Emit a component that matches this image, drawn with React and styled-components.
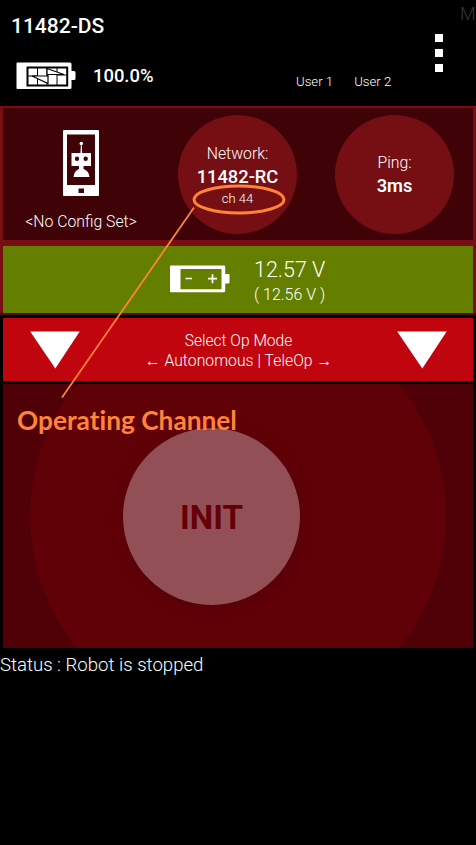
import React from "react";
import styled, { createGlobalStyle } from "styled-components";

const Global = createGlobalStyle`
  * { box-sizing: border-box; }
  body { margin: 0; background: #000; overflow: hidden; }
`;

const Screen = styled.main`
  position: relative;
  width: 476px;
  height: 845px;
  overflow: hidden;
  background: #000;
  color: #fff;
  font-family: Roboto, "Liberation Sans", sans-serif;
`;

const Label = styled.span`
  display: block;
  flex: none;
  white-space: pre;
  font-size: ${(p) => p.$size}px;
  line-height: ${(p) => p.$line}px;
  font-weight: ${(p) => p.$weight || 300};
  letter-spacing: ${(p) => p.$spacing || 0}px;
  color: ${(p) => p.$color || "#fff"};
`;

const Header = styled.header`
  display: grid;
  grid-template-columns: 296px 1fr;
  height: 106px;
`;

const DeviceColumn = styled.div`
  padding: 14px 0 0 11px;
`;

const BatteryRow = styled.div`
  display: flex;
  align-items: center;
  gap: 17px;
  height: 28px;
  margin: 24px 0 0 5px;
`;

const ActionColumn = styled.div`
  display: flex;
  flex-direction: column;
`;

const OverflowTitle = styled.div`
  height: 34px;
  padding: 3px 0 0 164px;
  overflow: hidden;
`;

const MenuButton = styled.button`
  display: grid;
  gap: 7px;
  width: 8px;
  margin: 0 0 0 139px;
  padding: 0;
  border: 0;
  background: none;
`;

const Dot = styled.span`
  width: 8px;
  height: 8px;
  background: #fff;
`;

const Users = styled.div`
  display: flex;
  gap: 21px;
  margin-top: 1px;
`;

const Dashboard = styled.section`
  height: 209px;
  padding: 2px 3px 0;
  background: linear-gradient(#760e13 0 206px, #4c100b 207px);
`;

const StatusPanel = styled.div`
  display: grid;
  grid-template-columns: 156px 157px 157px;
  height: 132px;
  background: #3f0207;
`;

const ConfigCell = styled.div`
  display: flex;
  flex-direction: column;
  align-items: center;
  padding-top: 22px;
  gap: 16px;
`;

const CircleCell = styled.div`
  display: flex;
  justify-content: center;
  padding-top: 7px;
`;

const Circle = styled.div`
  display: flex;
  flex-direction: column;
  align-items: center;
  width: 119px;
  height: 119px;
  padding-top: ${(p) => p.$top}px;
  border-radius: 50%;
  background: #760f14;
`;

const VoltageBar = styled.div`
  display: flex;
  height: 67px;
  margin-top: 6px;
  padding-left: 167px;
  background: #647f00;
`;

const BatteryHolder = styled.div`
  width: 84px;
  padding-top: 19px;
`;

const Readings = styled.div`
  padding-top: 10px;
`;

const ModeBar = styled.section`
  display: flex;
  justify-content: space-between;
  height: 63px;
  margin: 3px 3px 0;
  padding: 13px 26px 0 27px;
  background: #c0050f;
`;

const ModeText = styled.div`
  display: flex;
  flex-direction: column;
  align-items: center;
`;

const Stage = styled.section`
  position: relative;
  height: 264px;
  margin: 3px 3px 0;
  overflow: hidden;
  background: #500108;
`;

const Halo = styled.div`
  position: absolute;
  left: 27px;
  top: -76px;
  width: 416px;
  height: 416px;
  border-radius: 50%;
  background: #600007;
`;

const InitButton = styled.button`
  position: absolute;
  left: 120px;
  top: 44px;
  display: flex;
  align-items: center;
  justify-content: center;
  width: 177px;
  height: 177px;
  padding: 3px 0 0;
  border: 0;
  border-radius: 50%;
  background: #925056;
  box-shadow: 0 2px 12px 1px #56030a;
  font-family: inherit;
`;

const StatusLine = styled.footer`
  padding-top: 1px;
`;

const Callout = styled.div`
  position: absolute;
  left: 17px;
  top: 404px;
  color: #ff8437;
  font: 700 26px/32px Lato, "Open Sans", sans-serif;
  font-variant-ligatures: none;
  white-space: nowrap;
  transform: scaleX(1.01);
  transform-origin: 0 0;
`;

const Annotation = styled.svg`
  position: absolute;
  left: 0;
  top: 0;
  pointer-events: none;
`;

const PhoneBattery = () => (
  <svg width="60" height="28" viewBox="0 0 60 28">
    <path d="M1.500 0.500H54q1.500 0 1.500 1.500V9h2.500q1.500 0 1.500 1.500v6q0 1.500-1.500 1.500h-2.500v7.500q0 1.500-1.500 1.500H1.500Q0.500 27 0.500 26V1.500q0-1 1-1Z" fill="#fff" />
    <path d="M11.500 5.500H51.200V23.500H11.500Z" fill="#fff" stroke="#000" strokeWidth="2" />
    <path d="M21.500 5V24M31 5V24M41 5V24M12 14H22M41 13H50" stroke="#000" strokeWidth="1" />
    <path d="M48 12.500 31 6.500V14H16L32 21.500V12.500Z" fill="#fff" stroke="#000" strokeWidth="1.200" />
  </svg>
);

const RobotPhone = () => (
  <svg width="36" height="66" viewBox="0 0 36 66" fill="#fff">
    <path fillRule="evenodd" d="M1 0H35q1 0 1 1V65q0 1-1 1H1q-1 0-1-1V1Q0 0 1 0ZM4 4.500V55H32V4.500ZM15.500 58.500V63H21V58.500Z" />
    <circle cx="18.300" cy="13.500" r="1.800" />
    <path d="M17.900 14H18.700L19.200 24H17.400Z" />
    <path fillRule="evenodd" d="M8.500 23H28V36H20.500V39Q26 41 26.500 47H10.500Q11 41 16 39V36H8.500ZM11.800 28.800a2.200 2.200 0 1 0 4.400 0a2.200 2.200 0 1 0-4.400 0ZM20.500 28.800a2.200 2.200 0 1 0 4.400 0a2.200 2.200 0 1 0-4.400 0Z" />
  </svg>
);

const RobotBattery = () => (
  <svg width="60" height="28" viewBox="0 0 60 28" fill="#fff">
    <path fillRule="evenodd" d="M1 0.500H54q1.200 0 1.200 1.200V9H58.500q1 0 1 1v7.500q0 1-1 1H55.200V26q0 1.200-1.200 1.200H1q-1 0-1-1V1.500q0-1 1-1ZM10.500 4V24.300H51.500V4Z" />
    <path d="M15.500 13.500h6.500M38 13.700h9M42.500 9.200v9" stroke="#fff" strokeWidth="1.700" fill="none" />
  </svg>
);

const DownTriangle = () => (
  <svg width="50" height="40" viewBox="0 0 50 40">
    <path d="M0.200 0.500H49.700L25.300 37.600Z" fill="#fff" />
  </svg>
);

export default function App() {
  return (
    <Screen>
      <Global />
      <Header>
        <DeviceColumn>
          <Label $size={21} $line={24} $weight={500}>11482-DS</Label>
          <BatteryRow>
            <PhoneBattery />
            <Label $size={18.4} $line={26} $weight={500}>100.0%</Label>
          </BatteryRow>
        </DeviceColumn>
        <ActionColumn>
          <OverflowTitle>
            <Label $size={18} $line={22} $color="#383838">M</Label>
          </OverflowTitle>
          <MenuButton aria-label="Menu"><Dot /><Dot /><Dot /></MenuButton>
          <Users>
            <Label $size={13.2} $line={18}>User 1</Label>
            <Label $size={13.2} $line={18}>User 2</Label>
          </Users>
        </ActionColumn>
      </Header>
      <Dashboard>
        <StatusPanel>
          <ConfigCell>
            <RobotPhone />
            <Label $size={15.8} $line={20}>{"<No Config Set>"}</Label>
          </ConfigCell>
          <CircleCell>
            <Circle $top={28}>
              <Label $size={15.8} $line={21}>Network:</Label>
              <Label $size={18.3} $line={26} $weight={500}>11482-RC</Label>
              <Label $size={13} $line={17}>ch 44</Label>
            </Circle>
          </CircleCell>
          <CircleCell>
            <Circle $top={37}>
              <Label $size={15.8} $line={21}>Ping:</Label>
              <Label $size={18.3} $line={26} $weight={600}>3ms</Label>
            </Circle>
          </CircleCell>
        </StatusPanel>
        <VoltageBar>
          <BatteryHolder><RobotBattery /></BatteryHolder>
          <Readings>
            <Label $size={21.5} $line={28}>12.57 V</Label>
            <Label $size={16} $line={21}>( 12.56 V )</Label>
          </Readings>
        </VoltageBar>
      </Dashboard>
      <ModeBar>
        <DownTriangle />
        <ModeText>
          <Label $size={15.6} $line={21}>Select Op Mode</Label>
          <Label $size={15.7} $line={17} $spacing={0.05}>← Autonomous | TeleOp →</Label>
        </ModeText>
        <DownTriangle />
      </ModeBar>
      <Stage>
        <Halo />
        <InitButton>
          <Label $size={33.2} $line={40} $weight={700} $color="#650009">INIT</Label>
        </InitButton>
      </Stage>
      <StatusLine>
        <Label $size={18.6} $line={32}>Status : Robot is stopped</Label>
      </StatusLine>
      <Callout>Operating Channel</Callout>
      <Annotation width="476" height="845" fill="none" stroke="#ff8437">
        <ellipse cx="239" cy="199.500" rx="45" ry="13.500" strokeWidth="3" />
        <path d="M194 207.500 62 397.500" strokeWidth="1.800" />
      </Annotation>
    </Screen>
  );
}
